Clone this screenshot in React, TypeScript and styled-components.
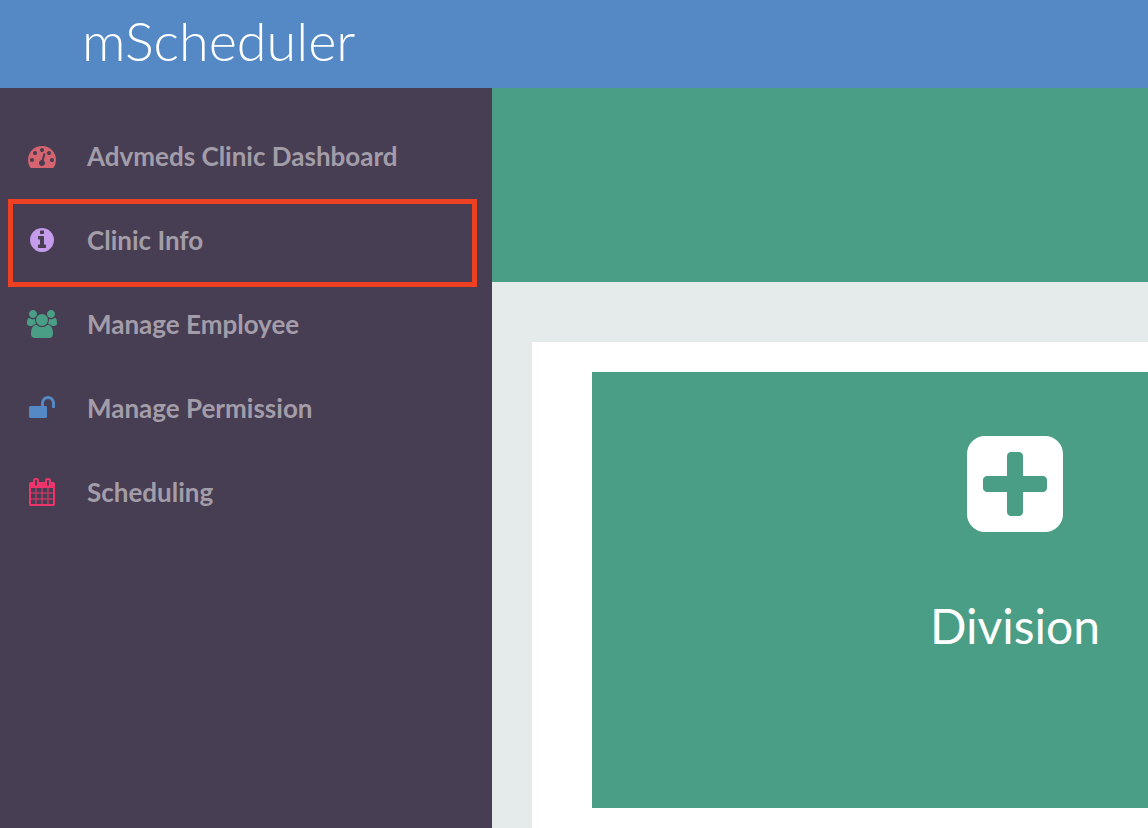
import React from "react";
import styled, { createGlobalStyle } from "styled-components";

const GlobalStyle = createGlobalStyle`
  *, *::before, *::after { box-sizing: border-box; }
  body {
    margin: 0;
    background: #e5eaea;
    font-family: Lato, "Liberation Sans", sans-serif;
  }
`;

const Page = styled.div`
  display: flex;
  flex-direction: column;
  min-height: 100vh;
`;

const Header = styled.header`
  display: flex;
  align-items: center;
  height: 88px;
  padding: 0 0 6px 82px;
  background: #5489c5;
`;

const Brand = styled.a`
  color: #fff;
  font-size: 54px;
  font-weight: 300;
  line-height: 80px;
  text-decoration: none;
`;

const Body = styled.div`
  display: flex;
  flex: 1;
`;

const Sidebar = styled.nav`
  flex: 0 0 492px;
  padding-top: 26px;
  background: #483e53;
`;

const NavList = styled.ul`
  margin: 0;
  padding: 0;
  list-style: none;
`;

const NavItem = styled.li`
  position: relative;
`;

const NavLink = styled.a`
  display: flex;
  align-items: center;
  gap: 29px;
  height: 84px;
  padding-left: 26px;
  color: #a39da9;
  font-size: 26px;
  font-weight: 700;
  line-height: 32px;
  text-decoration: none;
`;

const IconSlot = styled.span<{ $color: string }>`
  display: flex;
  flex: 0 0 32px;
  justify-content: center;
  color: ${({ $color }) => $color};
`;

const Glyph = styled.svg`
  flex: none;
  fill: currentColor;
`;

const Highlight = styled.span`
  position: absolute;
  top: 1px;
  right: 15px;
  left: 8px;
  height: 88px;
  border: 5px solid #ee4023;
  pointer-events: none;
`;

const Main = styled.main`
  display: flex;
  flex: 1;
  flex-direction: column;
  min-width: 0;
  overflow: hidden;
`;

const Banner = styled.div`
  height: 194px;
  background: #4a9e86;
`;

const Panel = styled.section`
  display: flex;
  flex: 1;
  margin: 60px 0 0 40px;
  padding: 30px 0 20px 60px;
  background: #fff;
`;

const Card = styled.a`
  display: flex;
  flex: 0 0 846px;
  flex-direction: column;
  align-items: center;
  gap: 62px;
  height: 436px;
  padding-top: 64px;
  background: #4a9e86;
  color: #fff;
  text-decoration: none;
`;

const CardTitle = styled.h2`
  margin: 0;
  font-size: 48px;
  font-weight: 400;
  line-height: 64px;
`;

type NavEntry = {
  label: string;
  color: string;
  x: number;
  units: number;
  path: string;
  active?: boolean;
};

const entries: NavEntry[] = [
  {
    label: "Advmeds Clinic Dashboard",
    color: "#d5646f",
    x: 0,
    units: 1792,
    path: "M384 1152q0-53-37.5-90.5t-90.5-37.5-90.5 37.5-37.5 90.5 37.5 90.5 90.5 37.5 90.5-37.5 37.5-90.5zm192-448q0-53-37.5-90.5t-90.5-37.5-90.5 37.5-37.5 90.5 37.5 90.5 90.5 37.5 90.5-37.5 37.5-90.5zm428 481l101-382q6-26-7.5-48.5t-38.5-29.5-48 6.5-30 39.5l-101 382q-60 5-107 43.5t-63 98.5q-20 77 20 146t117 89 146-20 89-117q16-60-6-117t-72-91zm660-33q0-53-37.5-90.5t-90.5-37.5-90.5 37.5-37.5 90.5 37.5 90.5 90.5 37.5 90.5-37.5 37.5-90.5zm-640-640q0-53-37.5-90.5t-90.5-37.5-90.5 37.5-37.5 90.5 37.5 90.5 90.5 37.5 90.5-37.5 37.5-90.5zm448 192q0-53-37.5-90.5t-90.5-37.5-90.5 37.5-37.5 90.5 37.5 90.5 90.5 37.5 90.5-37.5 37.5-90.5zm320 448q0 261-141 483-19 29-54 29h-1402q-35 0-54-29-141-221-141-483 0-182 71-348t191-286 286-191 348-71 348 71 286 191 191 286 71 348z",
  },
  {
    label: "Clinic Info",
    color: "#c59cec",
    x: 128,
    units: 1536,
    active: true,
    path: "M1152 1376v-160q0-14-9-23t-23-9h-96v-512q0-14-9-23t-23-9h-320q-14 0-23 9t-9 23v160q0 14 9 23t23 9h96v320h-96q-14 0-23 9t-9 23v160q0 14 9 23t23 9h448q14 0 23-9t9-23zm-128-896v-160q0-14-9-23t-23-9h-192q-14 0-23 9t-9 23v160q0 14 9 23t23 9h192q14 0 23-9t9-23zm640 416q0 209-103 385.5t-279.5 279.5-385.5 103-385.5-103-279.5-279.5-103-385.5 103-385.5 279.5-279.5 385.5-103 385.5 103 279.5 279.5 103 385.5z",
  },
  {
    label: "Manage Employee",
    color: "#4a9e86",
    x: 0,
    units: 1920,
    path: "M593 896q-162 5-265 128h-134q-82 0-138-40.5t-56-118.5q0-353 124-353 6 0 43.5 21t97.5 42.5 119 21.5q67 0 133-23-5 37-5 66 0 143 81 256zm1071 637q0 120-73 189.5t-194 69.5h-874q-121 0-194-69.5t-73-189.5q0-53 3.5-103.5t14-109 26.5-108.5 43-97.5 62-81 85.5-53.5 111.5-20q10 0 43 21.5t73 48 107 48 135 21.5 135-21.5 107-48 73-48 43-21.5q61 0 111.5 20t85.5 53.5 62 81 43 97.5 26.5 108.5 14 109 3.5 103.5zm-1024-1277q0 106-75 181t-181 75-181-75-75-181 75-181 181-75 181 75 75 181zm704 384q0 159-112.5 271.5t-271.5 112.5-271.5-112.5-112.5-271.5 112.5-271.5 271.5-112.5 271.5 112.5 112.5 271.5zm576 225q0 78-56 118.5t-138 40.5h-134q-103-123-265-128 81-113 81-256 0-29-5-66 66 23 133 23 59 0 119-21.5t97.5-42.5 43.5-21q124 0 124 353zm-128-609q0 106-75 181t-181 75-181-75-75-181 75-181 181-75 181 75 75 181z",
  },
  {
    label: "Manage Permission",
    color: "#5489c5",
    x: 64,
    units: 1664,
    path: "M1728 576v256q0 26-19 45t-45 19h-64q-26 0-45-19t-19-45v-256q0-106-75-181t-181-75-181 75-75 181v192h96q40 0 68 28t28 68v576q0 40-28 68t-68 28h-960q-40 0-68-28t-28-68v-576q0-40 28-68t68-28h672v-192q0-185 131.5-316.5t316.5-131.5 316.5 131.5 131.5 316.5z",
  },
  {
    label: "Scheduling",
    color: "#ef346b",
    x: 64,
    units: 1664,
    path: "M192 1664h288v-288h-288v288zm352 0h320v-288h-320v288zm-352-352h288v-320h-288v320zm352 0h320v-320h-320v320zm-352-384h288v-288h-288v288zm736 736h320v-288h-320v288zm-384-736h320v-288h-320v288zm768 736h288v-288h-288v288zm-384-352h320v-320h-320v320zm-352-864v-288q0-13-9.5-22.5t-22.5-9.5h-64q-13 0-22.5 9.5t-9.5 22.5v288q0 13 9.5 22.5t22.5 9.5h64q13 0 22.5-9.5t9.5-22.5zm736 864h288v-320h-288v320zm-384-384h320v-288h-320v288zm384 0h288v-288h-288v288zm32-480v-288q0-13-9.5-22.5t-22.5-9.5h-64q-13 0-22.5 9.5t-9.5 22.5v288q0 13 9.5 22.5t22.5 9.5h64q13 0 22.5-9.5t9.5-22.5zm384-64v1280q0 52-38 90t-90 38h-1408q-52 0-90-38t-38-90v-1280q0-52 38-90t90-38h128v-96q0-66 47-113t113-47h64q66 0 113 47t47 113v96h384v-96q0-66 47-113t113-47h64q66 0 113 47t47 113v96h128q52 0 90 38t38 90z",
  },
];

const plusSquare =
  "M1408 960v-128q0-26-19-45t-45-19h-320v-320q0-26-19-45t-45-19h-128q-26 0-45 19t-19 45v320h-320q-26 0-45 19t-19 45v128q0 26 19 45t45 19h320v320q0 26 19 45t45 19h128q26 0 45-19t19-45v-320h320q26 0 45-19t19-45zm256-544v960q0 119-84.5 203.5t-203.5 84.5h-960q-119 0-203.5-84.5t-84.5-203.5v-960q0-119 84.5-203.5t203.5-84.5h960q119 0 203.5 84.5t84.5 203.5z";

export default function App() {
  return (
    <Page>
      <GlobalStyle />
      <Header>
        <Brand href="#">mScheduler</Brand>
      </Header>
      <Body>
        <Sidebar aria-label="Clinic">
          <NavList>
            {entries.map((entry) => (
              <NavItem key={entry.label}>
                <NavLink href="#" aria-current={entry.active ? "page" : undefined}>
                  <IconSlot $color={entry.color}>
                    <Glyph
                      width={entry.units / 64}
                      height={28}
                      viewBox={`${entry.x} 0 ${entry.units} 1792`}
                      aria-hidden="true"
                    >
                      <path d={entry.path} />
                    </Glyph>
                  </IconSlot>
                  {entry.label}
                </NavLink>
                {entry.active && <Highlight />}
              </NavItem>
            ))}
          </NavList>
        </Sidebar>
        <Main>
          <Banner />
          <Panel>
            <Card href="#">
              <Glyph width={96} height={96} viewBox="128 128 1536 1536" aria-hidden="true">
                <path d={plusSquare} />
              </Glyph>
              <CardTitle>Division</CardTitle>
            </Card>
          </Panel>
        </Main>
      </Body>
    </Page>
  );
}
